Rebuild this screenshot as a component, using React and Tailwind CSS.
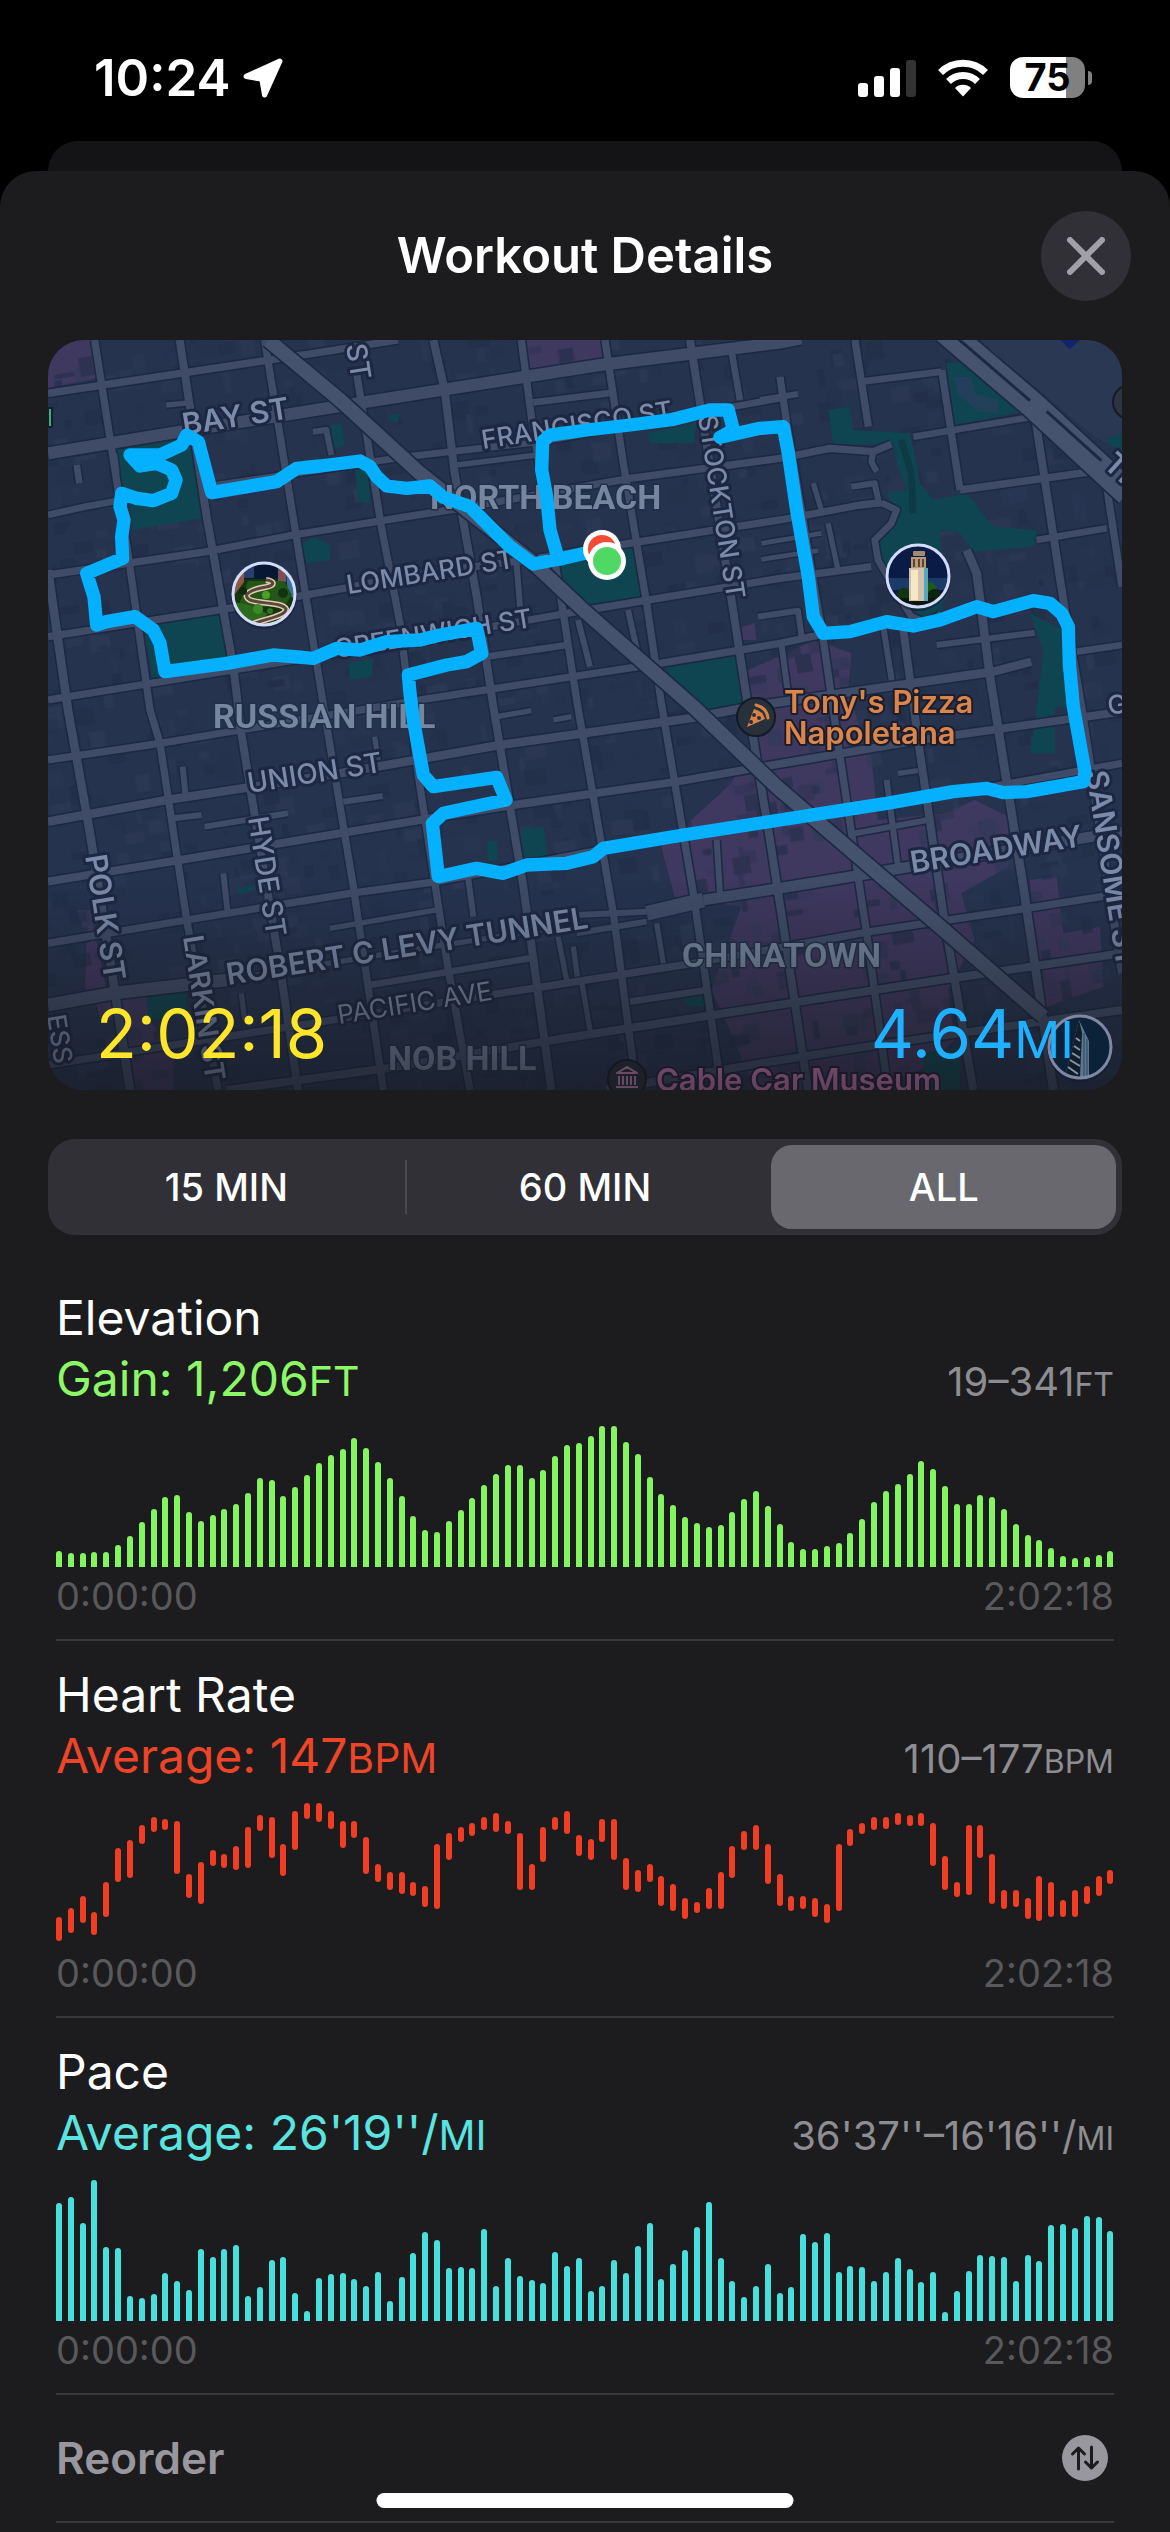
import { useState } from 'react'

const ELEVATION = [
  16, 14, 14, 15, 15, 22, 31, 45, 58, 70, 72, 55, 46, 52, 58, 63, 74, 89, 87, 71,
  80, 92, 104, 112, 118, 129, 119, 105, 89, 71, 51, 37, 35, 46, 57, 69, 82, 93, 102, 102,
  89, 97, 111, 122, 124, 131, 141, 141, 125, 113, 90, 73, 62, 50, 44, 40, 42, 55, 68, 76,
  61, 43, 25, 18, 18, 21, 24, 34, 48, 65, 76, 83, 93, 106, 98, 81, 63, 63, 72, 70,
  58, 43, 32, 27, 19, 11, 9, 10, 12, 16,
]

const PACE = [
  118, 124, 98, 141, 74, 73, 25, 23, 27, 48, 40, 31, 72, 64, 72, 76, 25, 34, 61, 64,
  28, 10, 43, 47, 48, 42, 35, 49, 20, 44, 68, 89, 81, 53, 54, 53, 92, 35, 63, 45,
  41, 38, 69, 55, 63, 30, 35, 61, 48, 75, 98, 42, 57, 71, 94, 119, 63, 40, 24, 35,
  57, 28, 34, 87, 79, 88, 49, 55, 54, 40, 49, 63, 52, 39, 49, 9, 30, 50, 66, 65,
  64, 40, 66, 60, 96, 97, 93, 105, 104, 90,
]

// [top, bottom] of each heart rate range, measured down from the top of the chart
const HEART = [
  [114, 138], [105, 130], [93, 120], [109, 132], [79, 114], [45, 79], [37, 75], [22, 41], [14, 29], [16, 27],
  [18, 71], [71, 95], [59, 101], [47, 63], [51, 65], [43, 67], [24, 65], [12, 28], [14, 55], [41, 73],
  [8, 47], [0, 16], [0, 19], [8, 26], [18, 45], [18, 35], [34, 71], [61, 79], [69, 87], [69, 91],
  [79, 93], [83, 104], [41, 106], [30, 57], [24, 39], [20, 33], [14, 27], [10, 29], [18, 31], [30, 87],
  [61, 87], [24, 59], [14, 27], [8, 31], [32, 53], [36, 57], [16, 39], [16, 57], [55, 87], [67, 89],
  [61, 79], [73, 103], [81, 108], [95, 116], [99, 110], [85, 106], [69, 106], [43, 75], [28, 47], [22, 47],
  [41, 81], [71, 103], [93, 108], [93, 106], [95, 114], [101, 120], [41, 108], [26, 43], [20, 31], [14, 27],
  [14, 26], [10, 22], [12, 23], [10, 23], [20, 63], [53, 87], [79, 94], [22, 92], [22, 55], [51, 101],
  [87, 106], [87, 104], [95, 116], [73, 118], [79, 114], [97, 114], [87, 114], [83, 101], [73, 93], [67, 81],
]

const SECTIONS = [
  {
    title: 'Elevation', label: 'Gain: 1,206', unit: 'FT', range: '19–341',
    text: 'text-[#8cf767]', bar: 'bg-[#83f55f] rounded-t-full',
    bars: ELEVATION.map((h) => [141 - h, 141]),
  },
  {
    title: 'Heart Rate', label: 'Average: 147', unit: 'BPM', range: '110–177',
    text: 'text-[#ee4427]', bar: 'bg-[#f03d24] rounded-full',
    bars: HEART,
  },
  {
    title: 'Pace', label: "Average: 26'19''/", unit: 'MI', range: "36'37''–16'16''/",
    text: 'text-[#5be3e0]', bar: 'bg-[#48e0dc] rounded-t-full',
    bars: PACE.map((h) => [141 - h, 141]),
  },
]

// Map geometry is drawn on a 3222 x 2250 grid, three units per map pixel
const STREETS = [
  ['0,160 850,32 1050,0', 22],
  ['0,340 396,275 1116,160 1656,75 2196,8 2260,-5', 36],
  ['0,525 110,500 220,480', 20],
  ['476,440 1076,350 1476,305 2196,175', 20],
  ['1226,375 1466,345', 16],
  ['1456,187 1696,158', 20],
  ['0,705 476,635 736,585 1076,530 1236,505 1746,415 2196,355 2346,325 2476,335 2530,312', 22],
  ['2476,335 2470,365 2486,395', 18],
  ['0,890 576,800 886,745 1116,700 1436,660 1776,605 2196,540 2436,495 2500,488', 22],
  ['0,1080 556,990 1076,905 1556,820 2196,715 2470,680', 22],
  ['1316,950 1556,915', 20],
  ['0,1260 336,1210 576,1170 1146,1075 1836,970 2196,910 2336,880', 22],
  ['0,1445 356,1380 876,1300 1356,1215 1926,1135 2136,1095 2836,995 2950,965', 26],
  ['0,1625 396,1560 1116,1440 1396,1395 1886,1325 2146,1280 2616,1200 3222,1115', 24],
  ['0,1810 416,1740 906,1660 1166,1625 1656,1530 2136,1450 2776,1350 3222,1270', 22],
  ['0,1995 196,1960 536,1920', 38],
  ['536,1920 1100,1828 1550,1760', 16],
  ['1796,1720 1966,1680', 44],
  ['1966,1680 2196,1645 2586,1580 3222,1475', 32],
  ['846,1765 1166,1710', 16],
  ['1586,1725 1796,1715', 18],
  ['1586,1780 1796,1745', 18],
  ['0,2175 406,2110 856,2040 1326,1965 1906,1875 2466,1775 2936,1705 3222,1660', 22],
  ['966,1935 1446,1855', 20],
  ['536,2250 1016,2185 1486,2105 1996,2025 2676,1920 3222,1840', 24],
  ['1746,1985 1976,1950', 20],
  ['1676,2250 2136,2170 2456,2120 3222,2010', 24],
  ['0,690 60,1110 126,1480 186,1860 246,2250', 26],
  ['140,0 190,320 240,640 306,1110 336,1210 416,1740 510,2250', 22],
  ['395,0 476,530 556,980 580,1180 616,1400 696,1880 750,2250', 24],
  ['650,0 740,560 806,970 840,1180 916,1640 1006,2250', 22],
  ['926,100 1000,560 1056,850 1110,1300 1196,1860 1266,2250', 22],
  ['1156,0 1190,150 1220,400 1286,770 1336,1100 1426,1640 1510,2250', 24],
  ['1420,0 1450,230 1546,820 1586,1080 1696,1720 1766,2250', 22],
  ['1671,0 1726,370 1796,790 1840,1090 1936,1660 2020,2250', 22],
  ['1926,0 1956,190 2046,750 2100,1100 2166,1500 2200,1720 2280,2250', 24],
  ['2050,30 2076,180', 20],
  ['2196,110 2216,250 2326,900 2376,1250 2456,1780 2520,2250', 22],
  ['2136,180 2250,162', 18],
  ['2421,0 2461,260', 22],
  ['2566,870 2616,1240 2686,1720 2776,2250', 24],
  ['2506,860 2531,1020', 18],
  ['2681,90 2736,450', 22],
  ['2441,125 2681,95', 20],
  ['2596,290 2956,230', 20],
  ['2736,450 3166,390', 22],
  ['2756,630 2786,700 2826,1010 2926,1640 3016,2250', 26],
  ['2961,230 3046,780 3100,1100 3222,1900', 24],
  ['3176,440 3222,740', 22],
  ['3086,935 3222,915', 20],
  ['2966,600 3176,565', 20],
  ['2500,488 2546,510 2530,550 2480,600 2490,660 2530,730 2590,830 2640,850 2680,820', 20],
  ['2666,915 2960,878', 18],
  ['2296,430 2320,510', 16],
  ['2410,440 2480,430 2495,500', 18],
  ['2340,550 2370,690', 16],
  ['2140,610 2320,580', 14],
  ['2140,658 2310,632', 14],
  ['86,375 94,430', 20],
  ['198,340 206,400', 18],
  ['355,195 430,188', 16],
  ['795,275 835,270 850,345', 18],
  ['404,1280 412,1360', 18],
  ['376,1435 460,1425', 18],
  ['470,1460 720,1420', 18],
  ['526,1600 538,1710', 18],
  ['980,1190 990,1260', 16],
  ['886,1385 1004,1368', 18],
  ['1400,600 1416,800', 18],
  ['1590,840 1626,980', 18],
  ['1740,810 1776,970', 18],
  ['1256,1580 1276,1730', 18],
  ['1530,1790 1556,1920', 16],
  ['1576,1820 1588,1910', 16],
  ['1826,1750 1846,1870', 16],
  ['1600,1920 1626,2070', 16],
  ['2006,1500 2016,1660', 18],
  ['1346,1130 1450,1112', 16],
  ['1516,1140 1570,1130', 16],
  ['2516,1320 2550,1580', 18],
  ['2420,1480 2640,1440', 18],
  ['2550,1300 2610,1292', 16],
  ['580,1960 590,2040', 16],
  ['2130,830 2250,812 2262,900', 18],
  ['2200,910 2220,1060', 18],
]

const PARKS = [
  '201,325 426,280 466,535 256,570 246,490 206,450',
  '286,850 516,820 536,955 316,1030',
  '841,260 881,250 891,315 846,330',
  '921,390 961,390 966,490 931,485',
  '761,610 800,590 848,615 846,660 776,670',
  '901,970 976,955 971,1010 906,1020',
  '1020,225 1055,222 1050,245 1025,240',
  '1526,670 1761,620 1786,770 1616,802 1546,740',
  '1796,280 1946,250 1936,310 1806,310',
  '1846,975 2061,935 2086,1090 1986,1115 1936,1100',
  '2341,210 2406,200 2416,270 2586,280 2616,430 2656,480 2756,460 2836,560 2966,570 2956,620 2776,635 2736,580 2676,570 2686,810 2616,830 2506,670 2486,610 2546,530 2516,460 2576,450 2546,370 2536,310 2356,315',
  '2696,70 2786,65 2946,210 2721,255',
  '2946,820 3046,870 3056,1100 3020,1100 3021,1240 2946,1240 2966,1110 2986,930',
  '3170,300 3222,280 3222,340',
  '1421,1465 1486,1460 1500,1550 1426,1550',
  '1316,1505 1345,1500 1350,1560 1320,1565',
  '296,1970 416,1960 416,2025 301,2040',
  '1896,1970 1971,1960 1971,2000 1926,2000',
  '2626,2140 2736,2120 2736,2250 2631,2250',
  '566,1645 620,1635 622,1650 574,1662',
]

const SHOPS = [
  '0,0 131,0 146,115 0,145',
  '1431,0 1661,0 1666,55 1446,88',
  '1840,1520 1930,1440 2050,1330 2110,1200 2080,1000 2300,900 2410,940 2400,1060 2470,1250 2490,1440 2690,1420 2780,1380 2880,1430 2880,1580 2740,1660 2780,1800 2700,1950 2720,2100 2640,2180 2450,2250 2120,2250 2050,2080 1990,1950 2080,1700 1880,1670',
  '2080,860 2120,850 2125,900 2085,900',
  '2946,1620 3026,1610 3046,1780 3156,1760 3166,1940 2996,2000 2956,1780',
  '86,1710 126,1710 176,1950 296,1970 306,2040 376,2140 376,2250 246,2250 206,2040 156,2040 136,1950 111,1950 116,1800',
]

const ROUTE =
  '1661,628 1546,655 1456,672 1386,620 1266,500 1186,472 1146,438 1076,445 1016,438 986,410 966,380 936,363 816,378 746,385 686,425 491,458 451,305 416,285 401,315 336,345 246,345 276,378 326,370 371,390 384,420 371,460 316,482 266,475 221,460 216,500 228,540 221,590 224,655 116,700 138,770 146,855 176,845 261,830 316,870 336,910 351,995 536,970 676,945 796,955 866,925 936,930 1016,905 1116,900 1176,885 1286,865 1301,940 1256,965 1196,975 1081,1005 1086,1060 1096,1140 1126,1305 1156,1340 1346,1312 1374,1380 1326,1390 1186,1420 1153,1450 1171,1610 1286,1585 1366,1600 1436,1575 1556,1570 1636,1550 1666,1525 1906,1485 2196,1440 2516,1390 2716,1355 2816,1345 2866,1358 2936,1355 3106,1325 3111,1295 3076,1100 3064,970 3061,860 3041,820 3006,790 2956,782 2836,815 2786,800 2676,840 2596,858 2516,845 2406,875 2326,880 2296,830 2281,710 2246,510 2221,340 2206,260 2136,265 2016,292 2056,270 2041,210 1986,210 1876,238 1746,255 1616,270 1506,285 1484,305 1481,390 1496,470 1506,570 1526,640'

// [text, x, y, rotation, size, weight]
const STREET_LABELS = [
  ['BAY ST', 136, 95, -9, 30, 600],
  ['LOMBARD ST', 300, 254, -9, 26, 500],
  ['GREENWICH ST', 288, 318, -9, 26, 500],
  ['FRANCISCO ST', 435, 109, -9, 26, 500],
  ['STOCKTON ST', 650, 76, 81, 26, 500],
  ['UNION ST', 201, 453, -9, 28, 500],
  ['HYDE ST', 200, 478, 81, 28, 500],
  ['POLK ST', 37, 516, 81, 30, 600],
  ['LARKIN ST', 135, 597, 81, 28, 600],
  ['ROBERT C LEVY TUNNEL', 180, 645, -9, 30, 600],
  ['PACIFIC AVE', 291, 684, -9, 26, 400],
  ['BROADWAY', 864, 533, -9, 30, 600],
  ['SANSOME ST', 1038, 432, 81, 30, 600],
  ['ST', 298, 5, 81, 28, 500],
  ['TH', 1054, 126, 42, 30, 600],
  ['G', 1061, 375, -9, 26, 500],
  ['ESS', -1, 676, 81, 26, 500],
]

const AREA_LABELS = [
  ['NORTH BEACH', 382, 169],
  ['RUSSIAN HILL', 165, 388],
  ['CHINATOWN', 634, 627],
  ['NOB HILL', 340, 730],
]

function makeLots() {
  let seed = 7
  const rand = () => {
    seed = (seed * 16807) % 2147483647
    return seed / 2147483647
  }
  const fills = ['#1e2d45', '#1f2b46', '#2c3956', '#1e2d45', '#2a3653']
  return Array.from({ length: 1900 }, (_, i) => ({
    x: Math.round(rand() * 3700 - 400),
    y: Math.round(rand() * 2900),
    w: Math.round(14 + rand() * 52),
    h: Math.round(14 + rand() * 46),
    fill: fills[i % fills.length],
  }))
}

const LOTS = makeLots()

function Streets() {
  return (
    <g transform="scale(0.33333)" fill="none" strokeLinejoin="round">
      {SHOPS.map((p) => <polygon key={p} points={p} fill="#3f385f" />)}
      <g transform="rotate(-9)" opacity="0.6">
        {LOTS.map((l, i) => <rect key={i} x={l.x} y={l.y} width={l.w} height={l.h} fill={l.fill} opacity={i % 2 ? 1 : 0.5} />)}
      </g>
      <polygon points="2790,0 3222,0 3222,330 3140,290" fill="#2b3854" />
      <polygon points="3036,0 3096,0 3066,28" fill="#12246b" />
      {PARKS.map((p) => <polygon key={p} points={p} fill="#0f4550" />)}
      <path d="M2560 300 L2590 400 2595 520" stroke="#0d3a44" strokeWidth="20" />
      <path d="M2720 110 L2770 110 2780 160 2850 180 2850 220 2790 215 2730 160Z" fill="#23405a" />
      {STREETS.map(([p, w]) => <polyline key={p} points={p} stroke="#1b2942" strokeWidth={w + 9} />)}
      {STREETS.map(([p, w]) => <polyline key={p} points={p} stroke="#3f4b67" strokeWidth={w} />)}
      <polyline points="660,0 876,180 1116,400 1446,660 1606,810 1936,1100 2186,1340 2676,1760 2986,2030" stroke="#1b2942" strokeWidth="52" />
      <polyline points="660,0 876,180 1116,400 1446,660 1606,810 1936,1100 2186,1340 2676,1760 2986,2030" stroke="#45526d" strokeWidth="42" />
      <polyline points="2690,-30 2960,200 3240,460" stroke="#1b2942" strokeWidth="88" />
      <polyline points="2690,-30 2960,200 3240,460" stroke="#46536f" strokeWidth="78" />
      <polyline points="2700,-30 2946,182" stroke="#1b2942" strokeWidth="9" />
      <polyline points="2996,214 3160,362" stroke="#1b2942" strokeWidth="9" />
    </g>
  )
}

function Label({ text, x, y, rotate, size, weight }) {
  return (
    <text
      transform={`translate(${x} ${y}) rotate(${rotate})`}
      fontSize={size}
      fontWeight={weight}
      fill="#7b8aa9"
      stroke="#1d2741"
      strokeWidth="6"
      strokeLinejoin="round"
      paintOrder="stroke"
    >
      {text}
    </text>
  )
}

function LombardPin() {
  return (
    <g transform="translate(216 254)">
      <circle r="33" fill="#101b33" opacity="0.5" cy="2" />
      <g clipPath="url(#pin)">
        <rect x="-32" y="-32" width="64" height="64" fill="#16350f" />
        <rect x="-32" y="-32" width="64" height="17" fill="#061832" />
        <path d="M-32 -22 L-20 -28 V-12 L-32 4Z" fill="#8a5a48" />
        <path d="M-20 -30 h10 v14 h-10z" fill="#27406b" />
        <path d="M14 -28 h8 v16 h-8z" fill="#7c4f55" />
        <path d="M22 -22 L32 -18 V6 L24 0Z" fill="#3d6fa5" />
        <path d="M-16 -13 h36 l8 14 -8 12 H-26 L-20 -2Z" fill="#24561a" />
        <path d="M-32 8 L-18 10 -4 16 4 20 -10 32 H-32Z" fill="#2c6a1e" />
        <path d="M2 -14 C10 -13 12 -9 2 -7 C-10 -5 -24 0 -14 6 C-4 10 18 8 22 15 C22 22 4 24 -14 31" fill="none" stroke="#e0ccb0" strokeWidth="6" />
        <path d="M2 -14 C10 -13 12 -9 2 -7 C-10 -5 -24 0 -14 6 C-4 10 18 8 22 15 C22 22 4 24 -14 31" fill="none" stroke="#5a463a" strokeWidth="3" />
        <circle cx="-21" cy="-3" r="4" fill="#0d2a0b" />
        <circle cx="-6" cy="15" r="5" fill="#3c8a27" />
        <circle cx="2" cy="1" r="4" fill="#49a02c" />
        <circle cx="19" cy="-1" r="5" fill="#12330f" />
        <circle cx="6" cy="17" r="3" fill="#2f7520" />
      </g>
      <circle r="31" fill="none" stroke="#d3dcfa" strokeWidth="3" />
    </g>
  )
}

function CoitPin() {
  return (
    <g transform="translate(870 236)">
      <circle r="33" fill="#101b33" opacity="0.5" cy="2" />
      <g clipPath="url(#pin)">
        <rect x="-32" y="-32" width="64" height="64" fill="#0a1b45" />
        <rect x="-32" y="2" width="64" height="12" fill="#1b3a68" />
        <circle cx="-14" cy="19" r="7" fill="#123510" />
        <circle cx="12" cy="12" r="6" fill="#1b5a18" />
        <circle cx="17" cy="21" r="8" fill="#0c230d" />
        <rect x="-22" y="22" width="44" height="10" fill="#0a1710" />
        <rect x="-9" y="-8" width="19" height="33" fill="#cfc3ad" />
        <rect x="-7" y="-6" width="7" height="30" fill="#f6e6c4" />
        <rect x="6" y="-8" width="4" height="33" fill="#5aa6b8" />
        <rect x="-7" y="-19" width="15" height="11" fill="#b69a78" />
        <path d="M-4 -17 v8 M1 -17 v8 M5 -17 v8" stroke="#5b4530" strokeWidth="2" />
        <rect x="-5" y="-25" width="12" height="5" rx="1" fill="#a38b70" />
      </g>
      <circle r="31" fill="none" stroke="#d3dcfa" strokeWidth="3" />
    </g>
  )
}

function PyramidPin() {
  return (
    <g transform="translate(1032 707)">
      <circle r="33" fill="#101b33" opacity="0.5" cy="2" />
      <g clipPath="url(#pin)">
        <rect x="-32" y="-32" width="64" height="64" fill="#0b2239" />
        <path d="M-1 -27 L9 -6 V30 H-15 Z" fill="#5d7690" />
        <path d="M-1 -27 L2 -14 L0 30 H-15 Z" fill="#121d2c" />
        <path d="M-4 -9 l4 3 M-6 -1 l6 4 M-8 6 l8 5 M-10 13 l10 6 M-12 20 l10 7" stroke="#8497aa" strokeWidth="2" />
        <path d="M4 -14 V30 M7 -8 V30" stroke="#2a445f" strokeWidth="1" />
      </g>
      <circle r="31" fill="none" stroke="#7f88a3" strokeWidth="3" />
    </g>
  )
}

function RouteMap() {
  return (
    <svg viewBox="0 0 1074 750" className="block h-auto w-full font-['Inter',sans-serif]" role="img" aria-label="Workout route">
      <defs>
        <clipPath id="pin"><circle r="31" /></clipPath>
        <linearGradient id="fade" x1="0" y1="0" x2="0" y2="1">
          <stop offset="0" stopColor="#15171d" stopOpacity="0" />
          <stop offset="1" stopColor="#15171d" stopOpacity="0.6" />
        </linearGradient>
      </defs>
      <rect width="1074" height="750" fill="#26334f" />
      <Streets />

      {STREET_LABELS.map(([text, x, y, rotate, size, weight]) => (
        <Label key={text + x} text={text} x={x} y={y} rotate={rotate} size={size} weight={weight} />
      ))}
      <g fill="#76869f" stroke="#222f49" strokeWidth="3" paintOrder="stroke" fontSize="34" fontWeight="700" className="font-['Roboto',sans-serif]">
        {AREA_LABELS.map(([text, x, y]) => <text key={text} x={x} y={y}>{text}</text>)}
      </g>

      <rect y="68" width="4" height="19" fill="#3fae80" stroke="#10202c" strokeWidth="2" />
      <circle cx="1082" cy="62" r="17" fill="#2b3440" stroke="#141b26" strokeWidth="2" />

      <circle cx="708" cy="377" r="19" fill="#28313b" stroke="#121a24" strokeWidth="2" />
      <path d="M708 365 Q719 368 720 378" fill="none" stroke="#d98248" strokeWidth="3" strokeLinecap="round" />
      <path d="M706 369 Q715 371 717 379 L699 387Z" fill="#d98248" strokeLinejoin="round" />
      <circle cx="706" cy="375" r="2" fill="#28313b" />
      <circle cx="711" cy="378" r="2" fill="#28313b" />
      <circle cx="703" cy="382" r="2" fill="#28313b" />
      <g fill="#d9854b" stroke="#1b1d2c" strokeWidth="4" strokeLinejoin="round" paintOrder="stroke" fontSize="31" fontWeight="600">
        <text x="736" y="373">Tony's Pizza</text>
        <text x="736" y="404">Napoletana</text>
      </g>

      <g transform="scale(0.33333)">
        <polyline points={ROUTE} fill="none" stroke="#05b0ff" strokeWidth="40" strokeLinejoin="round" strokeLinecap="round" />
      </g>
      <circle cx="554" cy="209" r="19" fill="#fff" />
      <circle cx="554" cy="209" r="14" fill="#f44a35" />
      <circle cx="559" cy="221" r="19" fill="#fff" />
      <circle cx="559" cy="221" r="14" fill="#4fd864" />

      <LombardPin />
      <CoitPin />

      <circle cx="579" cy="739" r="19" fill="#272c37" stroke="#121722" strokeWidth="2" />
      <g stroke="#d789c3" strokeWidth="2" fill="none" strokeLinejoin="round">
        <path d="M569 733 L579 727 L589 733Z" />
        <path d="M571 736 v9 M575 736 v9 M579 736 v9 M583 736 v9 M587 736 v9 M568 747 h22" />
      </g>
      <text x="608" y="751" fill="#d57fc0" stroke="#221b30" strokeWidth="4" paintOrder="stroke" fontSize="31" fontWeight="600">Cable Car Museum</text>
      <rect y="540" width="1074" height="210" fill="url(#fade)" />
      <PyramidPin />
    </svg>
  )
}

function StatusBar() {
  return (
    <div className="flex h-[141px] items-center justify-between pt-[14px] pr-[78px] pl-[94px]">
      <div className="flex items-center gap-3">
        <span className="text-[51px] leading-[60px] font-semibold">10:24</span>
        <svg viewBox="0 0 40 40" className="size-[42px] fill-white stroke-white" strokeWidth="5" strokeLinejoin="round">
          <path d="M36 4 L4 18.500 L19 21 L21.500 36Z" />
        </svg>
      </div>
      <div className="flex items-center gap-[22px]">
        <svg viewBox="0 0 58 38" className="h-[38px] w-[58px] fill-white">
          <rect x="0" y="24" width="10" height="14" rx="3" />
          <rect x="16" y="17" width="10" height="21" rx="3" />
          <rect x="32" y="9" width="10" height="29" rx="3" />
          <rect x="48" y="1" width="10" height="37" rx="3" fill="#333" />
        </svg>
        <svg viewBox="0 0 50 38" className="h-[38px] w-[50px]" fill="none" stroke="#fff" strokeWidth="7">
          <path d="M2.500 13.500 A32 32 0 0 1 47.500 13.500" />
          <path d="M10.500 22.500 A20.500 20.500 0 0 1 39.500 22.500" />
          <path d="M25 37.500 L17 29 A11.500 11.500 0 0 1 33 29Z" fill="#fff" stroke="none" />
        </svg>
        <div className="flex items-center gap-[3px]">
          <div className="flex h-[41px] w-[75px] items-center justify-center rounded-[13px] bg-linear-to-r from-white from-75% to-[#808080] to-75% text-[38px] leading-[41px] font-bold text-black">75</div>
          <span className="h-[14px] w-[4px] rounded-r-full bg-[#808080]" />
        </div>
      </div>
    </div>
  )
}

function RangePicker() {
  const ranges = ['15 MIN', '60 MIN', 'ALL']
  const [active, setActive] = useState(2)

  return (
    <div className="mx-12 mt-[49px] flex h-24 items-center gap-[6px] rounded-[27px] bg-[#313036] p-[6px]">
      {ranges.map((r, i) => (
        <div key={r} className="contents">
          {i > 0 && (
            <span className={`h-[54px] w-[2px] ${active === i || active === i - 1 ? 'bg-transparent' : 'bg-[#4a494f]'}`} />
          )}
          <button
            type="button"
            aria-pressed={active === i}
            onClick={() => setActive(i)}
            className={`h-[84px] flex-1 rounded-[21px] text-[38px] leading-[46px] font-medium ${active === i ? 'bg-[#69686e]' : ''}`}
          >
            {r}
          </button>
        </div>
      ))}
    </div>
  )
}

function Metric({ title, label, unit, range, text, bar, bars }) {
  return (
    <section className="border-b-2 border-[#38383b] pt-[23px] pb-[20px]">
      <h2 className="text-[48px] leading-[61px]">{title}</h2>
      <div className="flex h-[61px] items-baseline justify-between">
        <p className={`text-[48px] leading-[61px] ${text}`}>
          {label}<span className="text-[41px] leading-none">{unit}</span>
        </p>
        <p className="text-[40px] leading-[46px] text-[#8d8d92]">
          {range}<span className="text-[32px] leading-none">{unit}</span>
        </p>
      </div>
      <div className="mt-[17px] flex h-[141px] items-start justify-between">
        {bars.map(([top, bottom], i) => (
          <span key={i} className={`w-[6px] ${bar}`} style={{ marginTop: top, height: bottom - top }} />
        ))}
      </div>
      <div className="mt-[6px] flex justify-between text-[38px] leading-[46px] text-[#59595c]">
        <span>0:00:00</span>
        <span>2:02:18</span>
      </div>
    </section>
  )
}

export default function App() {
  return (
    <div className="relative flex min-h-screen flex-col bg-black font-['Inter',sans-serif] text-white">
      <StatusBar />
      <div className="mx-12 h-[30px] rounded-t-[30px] bg-[#141416]" />
      <main className="flex-1 rounded-t-[36px] bg-[#1c1c1e]">
        <header className="grid h-[169px] grid-cols-[1fr_auto_1fr] items-center px-[39px]">
          <h1 className="col-start-2 text-[49px] leading-[60px] font-semibold">Workout Details</h1>
          <button type="button" aria-label="Close" className="flex size-[90px] items-center justify-center justify-self-end rounded-full bg-[#313036]">
            <svg viewBox="0 0 38 38" className="size-[38px]" stroke="#a1a0a8" strokeWidth="6" strokeLinecap="round">
              <path d="M3 3 L35 35 M35 3 L3 35" />
            </svg>
          </button>
        </header>

        <div className="relative mx-12 overflow-hidden rounded-[36px]">
          <RouteMap />
          <div className="absolute inset-x-0 bottom-[10px] flex items-baseline justify-between px-12 text-[67px] leading-[80px]">
            <span className="text-[#ffe62b]">2:02:18</span>
            <span className="text-[#1fb0ff]">4.64<span className="text-[51px]">MI</span></span>
          </div>
        </div>

        <RangePicker />

        <div className="mt-[29px] px-14">
          {SECTIONS.map((s) => <Metric key={s.title} {...s} />)}
          <button type="button" className="flex h-[128px] w-full items-center justify-between border-b-2 border-[#38383b] pr-[6px] text-[44px] leading-[54px] font-semibold text-[#98979e]">
            Reorder
            <svg viewBox="0 0 46 46" className="size-[46px]" fill="none" stroke="#1c1c1e" strokeWidth="3" strokeLinecap="round" strokeLinejoin="round">
              <circle cx="23" cy="23" r="23" fill="#98979e" stroke="none" />
              <path d="M16.500 34 V13 M10.500 19 L16.500 13 L22.500 19" />
              <path d="M29.500 12 V33 M23.500 27 L29.500 33 L35.500 27" />
            </svg>
          </button>
        </div>
      </main>
      <div className="absolute bottom-6 left-1/2 h-[15px] w-[417px] -translate-x-1/2 rounded-full bg-white" />
    </div>
  )
}
